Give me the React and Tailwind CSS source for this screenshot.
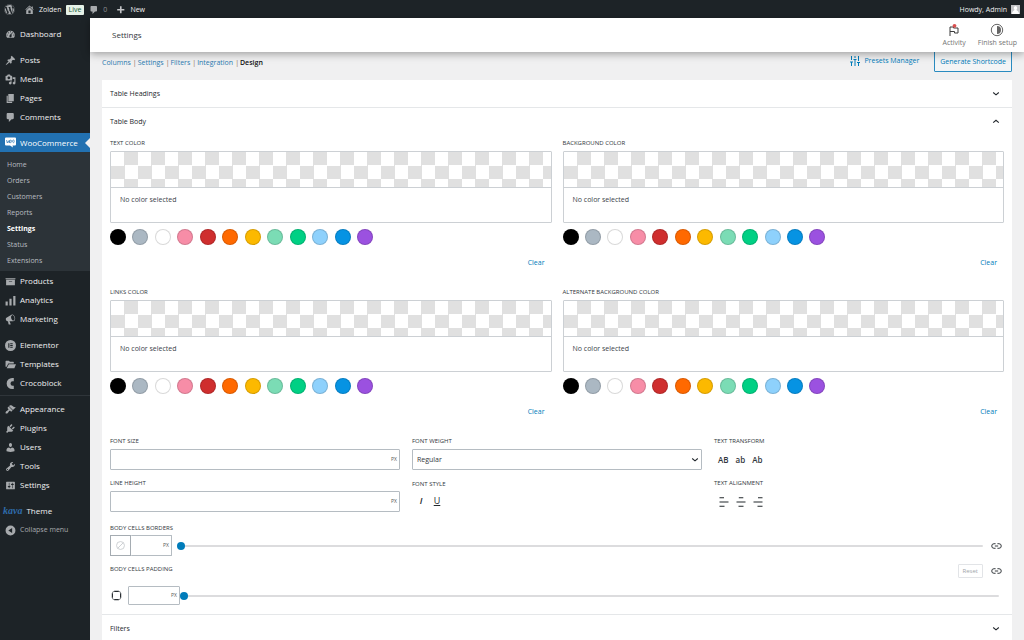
import { FaWordpress } from "react-icons/fa";

const ICONS = {
  dashboard:
    "M3.76 16h12.48c1.1-1.37 1.76-3.11 1.76-5 0-4.42-3.58-8-8-8s-8 3.58-8 8c0 1.89.66 3.63 1.76 5zM10 4c.55 0 1 .45 1 1s-.45 1-1 1-1-.45-1-1 .45-1 1-1zM6 6c.55 0 1 .45 1 1s-.45 1-1 1-1-.45-1-1 .45-1 1-1zm8 0c.55 0 1 .45 1 1s-.45 1-1 1-1-.45-1-1 .45-1 1-1zm-5.37 5.55L12 7v6c0 1.1-.9 2-2 2s-2-.9-2-2c0-.57.24-1.08.63-1.45zM4 10c.55 0 1 .45 1 1s-.45 1-1 1-1-.45-1-1 .45-1 1-1zm12 0c.55 0 1 .45 1 1s-.45 1-1 1-1-.45-1-1 .45-1 1-1z",
  posts:
    "M10.44 3.02l1.82-1.82 6.36 6.35-1.83 1.82c-1.05-.68-2.48-.57-3.41.36l-.75.75c-.92.93-1.04 2.35-.35 3.41l-1.83 1.82-2.41-2.41-2.8 2.79c-.42.42-3.38 2.71-3.8 2.29s1.86-3.39 2.28-3.81l2.79-2.79L4.1 9.36l1.83-1.82c1.05.69 2.48.57 3.4-.36l.75-.75c.93-.92 1.05-2.35.36-3.41z",
  media:
    "M13 11V4c0-.55-.45-1-1-1h-1.67L9 1H5L3.67 3H2c-.55 0-1 .45-1 1v7c0 .55.45 1 1 1h10c.55 0 1-.45 1-1zM7 4.5c1.38 0 2.5 1.12 2.5 2.5S8.38 9.5 7 9.5 4.5 8.38 4.5 7 5.62 4.5 7 4.5zM14 6h5v10.5c0 1.38-1.12 2.5-2.5 2.5S14 17.88 14 16.5s1.12-2.5 2.5-2.5c.17 0 .34.02.5.05V9h-3V6zm-4 8.05V13h2v3.5c0 1.38-1.12 2.5-2.5 2.5S7 17.88 7 16.5 8.12 14 9.5 14c.17 0 .34.02.5.05z",
  pages: "M6 15V2h10v13H6zm-1 1h8v2H3V5h2v11z",
  comments: "M5 2h9c1.1 0 2 .9 2 2v7c0 1.1-.9 2-2 2h-2l-5 5v-5H5c-1.1 0-2-.9-2-2V4c0-1.1.9-2 2-2z",
  home: "M16 8.5l1.53 1.53-1.06 1.06L10 4.6l-6.47 6.49-1.06-1.06L10 2.5l4 4v-2h2v4zm-6-2.46l6 5.99V18H4v-5.97zM12 17v-5H8v5h4z",
  plus: "M17 9v3h-5v5H9v-5H4V9h5V4h3v5z",
  products: "M19 4v2H1V4h18zM2 7h16v10H2V7zm11 3V9H7v1h6z",
  analytics: "M1 12h4v7H1zM8 7h4v12H8zM15 2h4v17h-4z",
  marketing:
    "M18.15 5.94c.46 1.62.38 3.22-.02 4.48-.42 1.28-1.26 2.18-2.3 2.48-.16.06-.26.06-.4.06-.06.02-.12.02-.18.02-.06.02-.14.02-.22.02h-6.8l2.22 5.5c.02.14-.06.26-.14.34-.08.1-.24.16-.34.16H6.95c-.1 0-.26-.06-.34-.16-.08-.08-.16-.2-.14-.34l-1-5.5H4.25l-.02-.02c-.5.06-1.08-.18-1.54-.62s-.88-1.08-1.06-1.88c-.24-.8-.2-1.56-.02-2.2.18-.62.58-1.08 1.06-1.3l.02-.02 9-5.4c.1-.06.18-.1.24-.16.06-.04.14-.08.24-.12.16-.08.28-.12.5-.18 1.04-.3 2.24.1 3.22.98s1.84 2.24 2.26 3.86zm-2.58 5.98h-.02c.4-.1.74-.34 1.04-.7.58-.7.86-1.76.86-3.04 0-.64-.1-1.3-.28-1.98-.34-1.36-1.02-2.5-1.78-3.24s-1.68-1.1-2.46-.88c-.82.22-1.4.96-1.7 2-.32 1.04-.28 2.36.06 3.72.38 1.36 1 2.5 1.8 3.24.78.74 1.62 1.1 2.48.88z",
  elementor: "M10 0a10 10 0 1 0 0 20 10 10 0 0 0 0-20zM6 6h2v8H6zM9.500 6H14v1.600H9.500zM9.500 9.200H14v1.600H9.500zM9.500 12.400H14V14H9.500z",
  templates: "M1 4c0-.6.400-1 1-1h5l2 2h6c.6 0 1 .4 1 1v2H6L3 14H1zM7 9.500h13L17 17H3z",
  crocoblock: "M13 0h3v6h-2a4 4 0 0 0 0 8h2v6h-3a10 10 0 0 1 0-20z",
  appearance:
    "M14.48 11.06L7.41 3.99l1.5-1.5c.5-.56 2.3-.47 3.51.32 1.21.8 1.43 1.28 2.91 2.1 1.18.64 2.45 1.26 4.45.85zm-.71.71L6.7 4.7 4.93 6.47c-.39.39-.39 1.02 0 1.41l1.06 1.06c.39.39.39 1.03 0 1.42-.6.6-1.43 1.11-2.21 1.69-.35.26-.7.53-1.01.84C1.43 14.23.4 16.08 1.4 17.07c.99 1 2.84-.03 4.18-1.36.31-.31.58-.66.85-1.02.57-.78 1.08-1.61 1.69-2.21.39-.39 1.02-.39 1.41 0l1.06 1.06c.39.39 1.02.39 1.41 0z",
  plugins:
    "M13.11 4.36L9.87 7.6 8 5.73l3.24-3.24c.35-.34 1.05-.2 1.56.32.52.51.66 1.21.31 1.55zm-8 1.77l.91-1.12 9.01 9.01-1.19.84c-.71.71-2.63 1.16-3.82 1.16H6.14L4.9 17.26c-.59.59-1.54.59-2.12 0-.59-.58-.59-1.53 0-2.12l1.24-1.24v-3.88c0-1.13.4-3.19 1.09-3.89zm7.26 3.97l3.24-3.24c.34-.35 1.04-.21 1.55.31.52.51.66 1.21.31 1.55l-3.24 3.25z",
  users:
    "M10 9.25c-2.27 0-2.73-3.44-2.73-3.44C7 4.02 7.82 2 9.97 2c2.16 0 2.98 2.02 2.71 3.81 0 0-.41 3.44-2.68 3.44zm0 2.57L12.72 10c2.39 0 4.52 2.33 4.52 4.53v2.49s-3.65 1.13-7.24 1.13c-3.65 0-7.24-1.13-7.24-1.13v-2.49c0-2.25 1.94-4.48 4.47-4.48z",
  tools:
    "M16.68 9.77c-1.34 1.34-3.3 1.67-4.95.99l-5.41 6.52c-.99.99-2.59.99-3.58 0s-.99-2.59 0-3.57l6.52-5.42c-.68-1.65-.35-3.61.99-4.95 1.28-1.28 3.12-1.62 4.72-1.06l-2.89 2.89 2.82 2.82 2.86-2.87c.53 1.58.18 3.39-1.08 4.65zM3.81 16.21c.4.39 1.04.39 1.43 0 .4-.4.4-1.04 0-1.43-.39-.4-1.03-.4-1.43 0-.39.39-.39 1.03 0 1.43z",
  settings:
    "M18 16V4c0-.55-.45-1-1-1H3c-.55 0-1 .45-1 1v12c0 .55.45 1 1 1h14c.55 0 1-.45 1-1zM8 11h1c.55 0 1 .45 1 1s-.45 1-1 1H8v1.5c0 .28-.22.5-.5.5s-.5-.22-.5-.5V13H6c-.55 0-1-.45-1-1s.45-1 1-1h1V5.5c0-.28.22-.5.5-.5s.5.22.5.5V11zm5-2h-1c-.55 0-1-.45-1-1s.45-1 1-1h1V5.5c0-.28.22-.5.5-.5s.5.22.5.5V7h1c.55 0 1 .45 1 1s-.45 1-1 1h-1v5.5c0 .28-.22.5-.5.5s-.5-.22-.5-.5V9z",
  collapse: "M10 1a9 9 0 1 0 0 18 9 9 0 0 0 0-18zM13 5.500v9L6 10z",
};

const SUBMENU = ["Home", "Orders", "Customers", "Reports", "Settings", "Status", "Extensions"];

const MENU_GROUPS = [
  [["products", "Products"], ["analytics", "Analytics"], ["marketing", "Marketing"]],
  [["elementor", "Elementor"], ["templates", "Templates"], ["crocoblock", "Crocoblock"]],
  [
    ["appearance", "Appearance"],
    ["plugins", "Plugins"],
    ["users", "Users"],
    ["tools", "Tools"],
    ["settings", "Settings"],
  ],
];

const SWATCHES = [
  ["Black", "bg-black"],
  ["Bluish gray", "bg-[#abb8c3]"],
  ["White", "bg-white"],
  ["Pale pink", "bg-[#f78da7]"],
  ["Vivid red", "bg-[#cf2e2e]"],
  ["Vivid orange", "bg-[#ff6900]"],
  ["Vivid amber", "bg-[#fcb900]"],
  ["Light green", "bg-[#7bdcb5]"],
  ["Vivid green", "bg-[#00d084]"],
  ["Pale blue", "bg-[#8ed1fc]"],
  ["Vivid blue", "bg-[#0693e3]"],
  ["Vivid purple", "bg-[#9b51e0]"],
];

function Icon({ name, className = "size-[11px]" }) {
  return (
    <svg viewBox="0 0 20 20" className={`${className} shrink-0`} fill="currentColor" fillRule="evenodd" aria-hidden="true">
      <path d={ICONS[name]} />
    </svg>
  );
}

function MenuItem({ icon, label }) {
  return (
    <a href="#" className="flex h-[19px] items-center gap-1 pt-px pl-[5px] text-[#f0f0f1]">
      <Icon name={icon} className="size-[11px] text-[#a7aaad]" />
      {label}
    </a>
  );
}

function WooIcon() {
  return (
    <svg viewBox="0 0 22 22" className="size-[11px] shrink-0" aria-hidden="true">
      <path d="M2 1h18a2 2 0 0 1 2 2v12a2 2 0 0 1-2 2h-5l1 4-6-4H2a2 2 0 0 1-2-2V3a2 2 0 0 1 2-2z" fill="#fff" />
      <path
        d="M3 6l1.500 6L7 7.500 8.500 12 9.500 6M13 9a1.600 2.800 0 1 0-.01.1M18.500 9a1.600 2.800 0 1 0-.01.1"
        fill="none"
        stroke="#2271b1"
        strokeWidth="1.300"
      />
    </svg>
  );
}

function Sidebar() {
  return (
    <aside className="w-[90px] shrink-0 bg-[#1d2327] pt-1.5 text-[8px] leading-3">
      <nav className="flex flex-col">
        <MenuItem icon="dashboard" label="Dashboard" />
        <div className="mt-[7px]">
          <MenuItem icon="posts" label="Posts" />
          <MenuItem icon="media" label="Media" />
          <MenuItem icon="pages" label="Pages" />
          <MenuItem icon="comments" label="Comments" />
        </div>
        <div className="mt-[7px]">
          <a href="#" className="flex h-[19px] items-center gap-1 bg-[#2271b1] pl-[5px] text-white">
            <WooIcon />
            WooCommerce
            <svg viewBox="0 0 5 10" className="ml-auto h-2.5 w-[5px] shrink-0" aria-hidden="true">
              <path d="M5 0v10L0 5z" fill="#f0f0f1" />
            </svg>
          </a>
          <div className="bg-[#2c3338] pt-[5px] pb-0.5 text-[7px]">
            {SUBMENU.map((item) => (
              <a
                key={item}
                href="#"
                className={`flex h-4 items-center pl-[7px] ${item === "Settings" ? "font-bold text-white" : "text-[#b8bcc0]"}`}
              >
                {item}
              </a>
            ))}
          </div>
        </div>
        {MENU_GROUPS.map((group, i) => (
          <div key={i} className={i === 0 ? "" : i === 2 ? "mt-[3px] border-t border-[#2f353a] pt-[3px]" : "mt-[7px]"}>
            {group.map(([icon, label]) => (
              <MenuItem key={label} icon={icon} label={label} />
            ))}
          </div>
        ))}
        <a href="#" className="mt-[7px] flex h-[19px] items-center gap-1 pl-[3px] text-[#f0f0f1]">
          <span className="font-['Liberation_Serif',serif] text-[10px] font-bold text-[#2f6cab] italic">kava</span>
          Theme
        </a>
        <button type="button" className="flex h-[19px] items-center gap-1 pt-px pl-[5px] text-[7px] text-[#a7aaad]">
          <Icon name="collapse" />
          Collapse menu
        </button>
      </nav>
    </aside>
  );
}

function AdminBar() {
  return (
    <header className="flex h-[18px] items-center bg-[#1d2327] pt-px pr-1 pl-1 leading-3 text-[#f0f0f1]">
      <a href="#" aria-label="WordPress">
        <FaWordpress className="size-[11px] text-[#a7aaad]" />
      </a>
      <a href="#" className="ml-[9px] flex items-center gap-1">
        <Icon name="home" className="size-[11px] text-[#a7aaad]" />
        Zolden
      </a>
      <span className="ml-1 flex h-2.5 items-center rounded-[1px] bg-[#e6f2e8] px-[3px] text-[#1c5a32]">Live</span>
      <a href="#" className="ml-[5px] flex items-center gap-1 text-[#8c8f94]">
        <Icon name="comments" className="size-[10px] text-[#a7aaad]" />
        0
      </a>
      <a href="#" className="ml-2 flex items-center gap-1">
        <Icon name="plus" className="size-[11px] text-[#c3c4c7]" />
        New
      </a>
      <a href="#" className="ml-auto flex items-center gap-1">
        Howdy, Admin
        <svg viewBox="0 0 10 10" className="size-[9px]" aria-hidden="true">
          <path d="M0 0h10v10H0z" fill="#c3c4c7" />
          <path d="M5 1a2 2.300 0 0 1 1 4.200c0 1 3 1.200 3 4.800H1C1 6.400 4 6.200 4 5.200A2 2.300 0 0 1 5 1z" fill="#fff" />
        </svg>
      </a>
    </header>
  );
}

function PageHeader() {
  return (
    <div className="relative z-10 flex h-[34px] items-center bg-white pr-[7px] pl-[22px] shadow-[0_2px_8px_rgba(0,0,0,0.35)]">
      <h1 className="text-[8px] leading-3 font-medium text-[#32373c]">Settings</h1>
      <div className="ml-auto flex gap-3 pt-px text-[7px] text-[#757575]">
        <button type="button" className="flex flex-col items-center">
          <svg viewBox="0 0 14 14" className="size-3.5" aria-hidden="true">
            <path d="M3 13V4h3.500v1H11v5H7.500V8.500H3" fill="none" stroke="#3c3c3c" strokeWidth="1" />
            <circle cx="7.500" cy="2.800" r="1.900" fill="#d94f4f" />
          </svg>
          <span className="leading-3">Activity</span>
        </button>
        <button type="button" className="flex flex-col items-center">
          <svg viewBox="0 0 14 14" className="size-3.5" aria-hidden="true">
            <circle cx="7" cy="7" r="5.700" fill="none" stroke="#666" strokeWidth="1" />
            <path d="M7 3a4 4 0 0 1 0 8z" fill="#666" />
          </svg>
          <span className="leading-3">Finish setup</span>
        </button>
      </div>
    </div>
  );
}

function Chevron({ up }) {
  return (
    <svg viewBox="0 0 8 8" className="size-2 shrink-0" fill="none" stroke="#23282d" strokeWidth="1.100" aria-hidden="true">
      <path d={up ? "M1.200 4.700L4 2.300l2.800 2.400" : "M1.200 2.500L4 4.900l2.800-2.400"} />
    </svg>
  );
}

function SectionTitle({ title, open }) {
  return (
    <button
      type="button"
      className="flex h-[27px] w-full items-center justify-between px-2 pt-px pr-3 leading-3 font-medium text-[#23282d]"
    >
      {title}
      <Chevron up={open} />
    </button>
  );
}

function ColorControl({ label }) {
  return (
    <div>
      <h3 className="h-[13px] text-[6px] leading-[10px] text-[#32373c] uppercase">{label}</h3>
      <div className="rounded-[1px] border border-[#ccd0d4]">
        <button
          type="button"
          aria-label={label}
          className="block h-[35px] w-full bg-[repeating-conic-gradient(#e0e0e0_0%_25%,#fff_0%_50%)] bg-size-[27px_27px]"
        />
        <div className="h-[35px] border-t border-[#ccd0d4] px-[9px] pt-1.5 text-[7px] leading-3">No color selected</div>
      </div>
      <div className="mt-1.5 flex w-[263px] justify-between">
        {SWATCHES.map(([name, color]) => (
          <button key={name} type="button" aria-label={name} className={`size-4 rounded-full border border-black/15 ${color}`} />
        ))}
      </div>
      <div className="mt-3 flex justify-end pr-[7px]">
        <button type="button" className="text-[7px] leading-3 text-[#007cba]">
          Clear
        </button>
      </div>
    </div>
  );
}

function Label({ children, htmlFor }) {
  return (
    <label htmlFor={htmlFor} className="block h-[13px] text-[6px] leading-[10px] text-[#32373c] uppercase">
      {children}
    </label>
  );
}

function PxInput({ id, label, className = "h-[21px]" }) {
  return (
    <div className={`flex items-center rounded-[1px] border border-[#b5bcc2] bg-white pr-0.5 ${className}`}>
      <input id={id} aria-label={label} className="h-full w-full min-w-0 outline-none" />
      <span className="text-[5px] text-[#555]">PX</span>
    </div>
  );
}

function Slider({ label }) {
  return (
    <input
      type="range"
      aria-label={label}
      defaultValue="0"
      className="h-[7px] min-w-0 flex-1 appearance-none bg-transparent [&::-webkit-slider-runnable-track]:h-0.5 [&::-webkit-slider-runnable-track]:rounded-full [&::-webkit-slider-runnable-track]:bg-[#dcdcde] [&::-webkit-slider-thumb]:-mt-[3px] [&::-webkit-slider-thumb]:size-2 [&::-webkit-slider-thumb]:appearance-none [&::-webkit-slider-thumb]:rounded-full [&::-webkit-slider-thumb]:bg-[#007cba]"
    />
  );
}

function LinkButton({ label }) {
  return (
    <button type="button" aria-label={label} className="mr-0.5">
      <svg viewBox="0 0 12 8" className="h-2 w-[11px]" fill="none" stroke="#23282d" strokeWidth="1" aria-hidden="true">
        <path d="M5 1.500H3.300a2.500 2.500 0 0 0 0 5H5M7 1.500h1.700a2.500 2.500 0 0 1 0 5H7M4.200 4h3.600" />
      </svg>
    </button>
  );
}

function AlignIcon({ d }) {
  return (
    <svg viewBox="0 0 10 10" className="size-2.5" stroke="#23282d" strokeWidth="1.100" aria-hidden="true">
      <path d={d} />
    </svg>
  );
}

function Typography() {
  return (
    <div className="mt-[18px] grid grid-cols-3 gap-x-3">
      <div>
        <Label htmlFor="font-size">Font size</Label>
        <PxInput id="font-size" />
        <div className="mt-2">
          <Label htmlFor="line-height">Line height</Label>
          <PxInput id="line-height" />
        </div>
      </div>
      <div>
        <Label htmlFor="font-weight">Font weight</Label>
        <div className="grid items-center">
          <select
            id="font-weight"
            className="col-start-1 row-start-1 h-[21px] appearance-none rounded-[1px] border border-[#b5bcc2] bg-white pt-px pl-1 text-[7px] text-[#32373c]"
          >
            <option>Regular</option>
          </select>
          <span className="pointer-events-none col-start-1 row-start-1 mr-[3px] justify-self-end">
            <Chevron />
          </span>
        </div>
        <h3 className="mt-[9px] h-[13px] text-[6px] leading-[10px] text-[#32373c] uppercase">Font style</h3>
        <div className="flex h-[18px] items-center gap-1.5 pl-1 text-[9px] text-[#23282d]">
          <button type="button" className="w-2.5 font-semibold italic">I</button>
          <button type="button" className="w-2.5 underline">U</button>
        </div>
      </div>
      <div>
        <h3 className="h-[13px] text-[6px] leading-[10px] text-[#32373c] uppercase">Text transform</h3>
        <div className="flex h-[21px] items-center gap-[7px] pt-px pl-1 text-[8px] font-semibold text-[#32373c]">
          <button type="button">AB</button>
          <button type="button">ab</button>
          <button type="button">Ab</button>
        </div>
        <h3 className="mt-2 h-[13px] text-[6px] leading-[10px] text-[#32373c] uppercase">Text alignment</h3>
        <div className="flex h-[21px] items-center gap-[7px] pl-[5px]">
          <button type="button" aria-label="Align left">
            <AlignIcon d="M.500 .8h4.500M.500 5h9M.500 9.200h5" />
          </button>
          <button type="button" aria-label="Align center">
            <AlignIcon d="M2.800 .8h4.500M.500 5h9M2.500 9.200h5" />
          </button>
          <button type="button" aria-label="Align right">
            <AlignIcon d="M5 .8h4.500M.500 5h9M4.500 9.200h5" />
          </button>
        </div>
      </div>
    </div>
  );
}

function CellsControls() {
  return (
    <>
      <div className="mt-[11px]">
        <Label htmlFor="borders">Body cells borders</Label>
        <div className="-mt-px flex items-center">
          <button
            type="button"
            aria-label="Border color"
            className="flex h-[21px] w-[21px] shrink-0 items-center justify-center border border-[#a5acb2]"
          >
            <svg viewBox="0 0 10 10" className="size-[9px]" fill="none" stroke="#c8cccf" aria-hidden="true">
              <circle cx="5" cy="5" r="4.400" />
              <path d="M2 8l6-6" />
            </svg>
          </button>
          <PxInput id="borders" className="h-[21px] w-[41px] border-l-0" />
          <div className="ml-[5px] flex flex-1">
            <Slider label="Body cells borders" />
          </div>
          <div className="ml-2 flex">
            <LinkButton label="Link borders" />
          </div>
        </div>
      </div>
      <div className="mt-2 flex items-start justify-between">
        <Label htmlFor="padding">Body cells padding</Label>
        <div className="flex items-center gap-2">
          <button type="button" className="h-3.5 rounded-[1px] border border-[#e2e4e7] px-1 text-[6px] text-[#a0a5aa]">
            Reset
          </button>
          <LinkButton label="Link padding" />
        </div>
      </div>
      <div className="mt-2 flex items-center pr-[5px]">
        <svg viewBox="0 0 12 12" className="mr-1.5 ml-px size-[11px] shrink-0" fill="none" stroke="#23282d" strokeWidth="1.300" aria-hidden="true">
          <path d="M3.500 1.500h5M3.500 10.500h5M1.500 3.500v5M10.500 3.500v5" />
          <path d="M1.500 3.500q0-2 2-2M8.500 1.500q2 0 2 2M10.500 8.500q0 2-2 2M3.500 10.500q-2 0-2-2" strokeWidth="0.600" />
        </svg>
        <PxInput id="padding" className="h-[19px] w-[52px]" />
        <Slider label="Body cells padding" />
      </div>
    </>
  );
}

function TabLinks() {
  return (
    <nav className="flex gap-px text-[#8c6a4f]">
      {["Columns", "Settings", "Filters", "Integration"].map((tab) => (
        <span key={tab} className="flex gap-0.5">
          <a href="#" className="text-[#2a7ab0]">
            {tab}
          </a>
          |
        </span>
      ))}
      <a href="#" className="font-semibold text-[#111]">
        Design
      </a>
    </nav>
  );
}

export default function App() {
  return (
    <div className="flex min-h-screen flex-col bg-[#f0f0f1] font-['Open_Sans','Noto_Sans',sans-serif] text-[7px] text-[#3c434a]">
      <AdminBar />
      <div className="flex flex-1">
        <Sidebar />
        <main className="min-w-0 flex-1">
          <PageHeader />
          <div className="-mt-0.5 pr-3 pl-3">
            <div className="flex h-[30px] items-start justify-between">
              <div className="flex h-[26px] items-center">
                <TabLinks />
              </div>
              <div className="flex h-[21px] items-center gap-[15px] pt-px leading-3 text-[#007cba]">
                <button type="button" className="flex items-center gap-1">
                  <svg viewBox="0 0 10 10" className="size-2.5" fill="none" stroke="currentColor" aria-hidden="true">
                    <path d="M1.500 0v4M1.500 6v4M5 0v2M5 4v6M8.500 0v5M8.500 7v3M0 6h3M3.500 3.500h3M7 6.500h3" />
                  </svg>
                  Presets Manager
                </button>
                <button type="button" className="h-[21px] rounded-[1px] border border-[#2a8bc0] bg-[#f3f5f6] px-[5px] pt-px">
                  Generate Shortcode
                </button>
              </div>
            </div>
            <section className="bg-white">
              <SectionTitle title="Table Headings" />
              <div className="border-t border-[#e5e7e9]">
                <SectionTitle title="Table Body" open />
                <div className="px-2 pt-[3px] pb-[9px]">
                  <div className="grid grid-cols-2 gap-x-[11px] gap-y-[18px]">
                    <ColorControl label="Text color" />
                    <ColorControl label="Background color" />
                    <ColorControl label="Links color" />
                    <ColorControl label="Alternate background color" />
                  </div>
                  <Typography />
                  <CellsControls />
                </div>
              </div>
              <div className="border-t border-[#e5e7e9]">
                <SectionTitle title="Filters" />
              </div>
            </section>
          </div>
        </main>
      </div>
    </div>
  );
}
